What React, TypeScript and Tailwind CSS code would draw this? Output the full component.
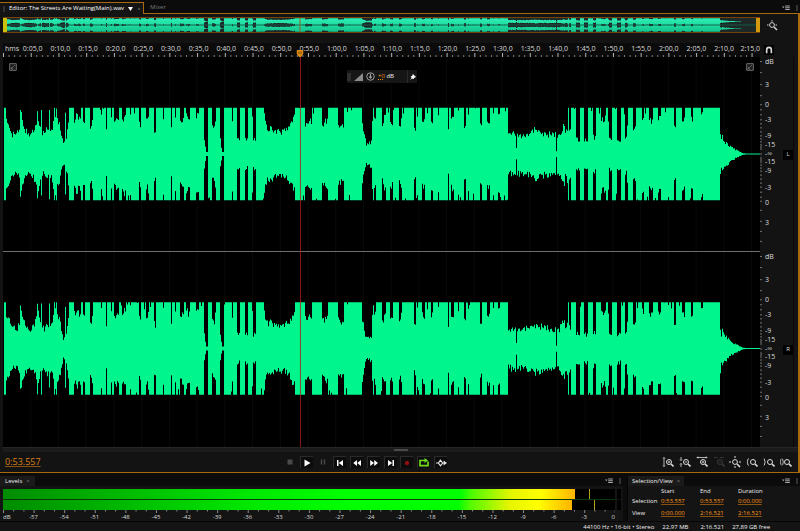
import React, { useState } from "react";

// Total clip length and cursor position, in seconds
const DURATION = 136.521;
const CURSOR = 53.557;
const WAVE_WIDTH = 757;
const FULL = 46;

// Outline of the clip as [x, half height]
const envelope: [number, number][] = [
  [0, 0], [1, 46], [2, 46], [2.5, 33], [5, 29], [7, 25], [9, 20], [11, 21], [13, 19], [15, 22], [16, 24],
  [17, 42], [18, 40], [19, 32], [21, 26], [24, 20], [27, 20], [30, 23], [32, 27], [33, 30], [34, 45], [35, 36],
  [36, 31], [37, 26], [38, 43], [39, 22], [41, 19], [43, 25], [45, 24], [46, 42], [47, 24], [48, 22], [49, 26],
  [50, 33], [51, 46], [52, 38], [53, 46], [54, 33], [56, 29], [58, 18], [59, 14], [60, 10], [61, 12], [62, 40],
  [63, 17], [64, 22], [65, 28], [66, 46], [260.5, 46], [261.5, 34], [263, 28], [265, 24], [268, 27], [272, 22],
  [277, 22], [282, 23], [286, 27], [289, 33], [291, 36], [292, 46], [358, 46], [359, 30], [361, 17], [363, 10],
  [368, 12], [369, 46], [504, 46], [505, 18], [510, 21], [518, 19], [525, 20], [531, 24], [540, 21], [549, 19],
  [556, 19], [558, 23], [561, 30], [562, 21], [564, 26], [565, 46], [716, 46], [717, 22], [718, 14], [719, 17],
  [721, 12], [724, 11], [727, 7], [731, 5], [735, 3], [739, 1], [742, 0.5], [757, 0.5],
];

// Places where the loud parts drop: [from, to, half height]
const dips: [number, number, number][] = [
  [71, 73, 34], [73, 75, 38], [75, 78, 35], [80, 82, 33], [87, 89, 27], [89, 90, 34], [98, 99, 38], [103, 104, 23],
  [108, 109, 36], [111, 113, 33], [113, 116, 35], [119, 121, 35], [121, 123, 39], [127, 128, 41], [136, 138, 30],
  [143, 145, 33], [145, 146, 38], [151, 153, 24], [160, 161, 38], [168, 169, 24], [172, 173, 35], [177, 179, 31],
  [179, 181, 34], [183, 185, 37], [185, 187, 34], [193, 196, 38], [201, 202, 14], [202, 203, 7], [203, 205, 2],
  [209, 212, 27], [212, 213, 33], [217, 218, 14], [218, 219, 6], [219, 221, 2], [229, 230, 34], [234, 237, 14],
  [242, 245, 14], [249, 250, 38], [250, 253, 14], [302, 306, 30], [306, 309, 32], [319, 322, 29], [322, 325, 32],
  [335, 338, 28], [338, 341, 27], [369, 370, 32], [371, 373, 33], [379, 381, 27], [381, 383, 36], [387, 390, 31],
  [396, 398, 28], [398, 399, 36], [411, 413, 25], [414, 415, 38], [419, 422, 33], [428, 430, 34], [435, 436, 40],
  [445, 446, 23], [448, 451, 34], [455, 456, 40], [461, 463, 27], [465, 466, 38], [477, 479, 28], [484, 487, 34],
  [490, 491, 40], [495, 497, 38], [513, 514, 6], [553, 554, 3], [566, 568, 22], [573, 577, 15], [581, 585, 14],
  [590, 593, 17], [598, 600, 36], [600, 603, 35], [605, 606, 34], [606, 609, 15], [614, 618, 14], [622, 624, 18],
  [624, 625, 26], [630, 633, 27], [639, 641, 37], [646, 650, 33], [655, 658, 35], [671, 673, 25], [679, 682, 34],
  [688, 690, 35], [698, 700, 41],
];

const heightAt = (x: number) => {
  const dip = dips.find(([from, to]) => x >= from && x < to);
  if (dip) return dip[2];
  const i = envelope.findIndex(([px]) => px > x);
  if (i < 1) return envelope[envelope.length - 1][1];
  const [x0, h0] = envelope[i - 1];
  const [x1, h1] = envelope[i];
  return h0 + ((h1 - h0) * (x - x0)) / (x1 - x0);
};

// Small repeatable noise so that both channels look sampled
const noise = (n: number) => {
  const v = Math.sin(n * 127.1) * 43758.5453;
  return v - Math.floor(v);
};

const halfWave = (center: number, sign: number, scale: number, seed: number) => {
  let d = "";
  for (let x = 0; x < WAVE_WIDTH; x++) {
    let h = heightAt(x);
    if (h < FULL - 0.5 && h > 2) h += (noise(x + seed) - 0.5) * Math.min(7, h * 0.35);
    else if (h >= FULL - 0.5 && noise(x * 3 + seed) > 0.95) h -= 7 * noise(x + seed);
    const y = (center + sign * Math.min(h, FULL) * scale).toFixed(2);
    d += `V${y}H${x + 1}`;
  }
  return `M0 ${center}${d}V${center}Z`;
};

const channelPath = (center: number, scale: number, seed: number) =>
  halfWave(center, -1, scale, seed) + halfWave(center, 1, scale, seed + 500);

const waveLeft = channelPath(96.5, 1, 1);
const waveRight = channelPath(290, 1, 9);
const overviewPath = channelPath(3.75, 0.078, 1) + channelPath(11.25, 0.078, 9);

const timeLabels = Array.from({ length: 27 }, (_, i) => {
  const s = (i + 1) * 5;
  return `${Math.floor(s / 60)}:${String(s % 60).padStart(2, "0")},0`;
});

// dB labels, each with the space that stands above it
const channelScale: [string, number][] = [
  ["dB", 5], ["3", 23], ["0", 20], ["-3", 15], ["-9", 16], ["-15", 9], ["-∞", 9],
  ["-15", 8], ["-9", 9], ["-3", 17], ["0", 14], ["3", 20],
];
const tickRows = [5, 16, 28, 39, 48, 53, 58, 63, 67, 71, 75, 79, 82, 85, 88, 90, 92, 97, 101, 103, 105, 108, 111, 114, 118, 122, 126, 130, 135, 140, 144, 153, 164, 174, 184];

const meterLabels = ["-57", "-54", "-51", "-48", "-45", "-42", "-39", "-36", "-33", "-30", "-27", "-24", "-21", "-18", "-15", "-12", "-9", "-6", "-3"];

type IconProps = { children: React.ReactNode; className?: string };

const Icon = ({ children, className = "size-3" }: IconProps) => (
  <svg viewBox="0 0 12 12" className={className} fill="none" stroke="currentColor" strokeWidth="1" aria-hidden="true">
    {children}
  </svg>
);

const Lens = ({ sign = "plus" }: { sign?: string }) => (
  <>
    <circle cx="7" cy="6" r="2.5" />
    <path d="M9 8l2.5 2.5" strokeWidth="1.6" />
    {sign !== "none" && <path d="M5.8 6h2.4" strokeWidth="0.8" />}
    {sign === "plus" && <path d="M7 4.8v2.4" strokeWidth="0.8" />}
  </>
);

const MenuIcon = () => (
  <svg viewBox="0 0 8 6" className="h-1.5 w-2" fill="#a8a8a8" aria-hidden="true">
    <path d="M0 1.5h2.6L1.3 3.3zM3.2 .5h4.6v1H3.2zM3.2 2.2h4.6v1H3.2zM3.2 3.9h4.6v1H3.2z" />
  </svg>
);

const Grip = () => <span className="h-1.5 w-0.5 bg-[#333333]" />;

const transport = [
  { label: "Stop", color: "text-[#4a4a4a]", box: false, icon: <path d="M3.5 3.5h5v5h-5z" fill="currentColor" stroke="none" /> },
  { label: "Play", color: "text-white", box: true, icon: <path d="M3.5 2.5L9.5 6l-6 3.5z" fill="currentColor" stroke="none" /> },
  { label: "Pause", color: "text-[#4a4a4a]", box: false, icon: <path d="M4.5 3.5v5M7.5 3.5v5" strokeWidth="1.4" /> },
  { label: "Move to previous", color: "text-white", box: true, icon: <path d="M3 3h1.5v6H3zM9 3v6L4.8 6z" fill="currentColor" stroke="none" /> },
  { label: "Rewind", color: "text-white", box: true, icon: <path d="M6 3v6L2.2 6zM10 3v6L6.2 6z" fill="currentColor" stroke="none" /> },
  { label: "Fast forward", color: "text-white", box: true, icon: <path d="M2.2 3v6L6 6zM6.2 3v6L10 6z" fill="currentColor" stroke="none" /> },
  { label: "Move to next", color: "text-white", box: true, icon: <path d="M3 3v6l4.2-3zM7.5 3H9v6H7.5z" fill="currentColor" stroke="none" /> },
  { label: "Record", color: "text-[#8e0f0f]", box: true, icon: <circle cx="6" cy="6" r="2.2" fill="currentColor" stroke="none" /> },
  { label: "Loop playback", color: "text-[#6fdc1e]", box: true, icon: <><path d="M4 3.5H2v5.2h8V4.6M4 3.5h3" strokeWidth="1.7" /><path d="M6.5 1l3.6 2.5L6.5 6z" fill="currentColor" stroke="none" /></> },
  { label: "Skip selection", color: "text-[#e6e6e6]", box: true, icon: <><path d="M1 6h2.5M7.5 6H10M5.5 3.2L3.4 6l2.1 2.8L7.6 6z" strokeWidth="1.2" /><path d="M8.6 3.6L12 6 8.6 8.4z" fill="currentColor" stroke="none" /></> },
];

const zooms = [
  { label: "Zoom in amplitude", dim: false, icon: <><path d="M2 1.5v9M1 2.5l1-1 1 1M1 9.5l1 1 1-1" strokeWidth="0.8" /><Lens /></> },
  { label: "Zoom out amplitude", dim: false, icon: <><path d="M2 1v3.5M2 7.5v3.5M1 3.5l1 1 1-1M1 8.5l1-1 1 1" strokeWidth="0.8" /><Lens sign="minus" /></> },
  { label: "Zoom in time", dim: false, icon: <><path d="M1 1.5h10M2 .5l-1 1 1 1M10 .5l1 1-1 1" strokeWidth="0.8" /><Lens /></> },
  { label: "Zoom out time", dim: true, icon: <><path d="M1 1.5h4M7 1.5h4" strokeWidth="0.8" /><Lens sign="minus" /></> },
  { label: "Zoom out full", dim: false, icon: <><circle cx="6" cy="6" r="2.4" /><path d="M8 8l3 3" strokeWidth="1.6" /><path d="M6 0v2M6 10v2M0 6h2M10 6h2" /></> },
  { label: "Zoom to in point", dim: false, icon: <><path d="M2.6 2.5c-1.2 0-.4 3-1.6 3.5 1.2.5.4 3.5 1.6 3.5" strokeWidth="0.9" /><Lens sign="none" /></> },
  { label: "Zoom to out point", dim: false, icon: <><path d="M.8 2.5c1.2 0 .4 3 1.6 3.5-1.2.5-.4 3.5-1.6 3.5" strokeWidth="0.9" /><Lens sign="none" /></> },
  { label: "Zoom to selection", dim: false, icon: <><path d="M1.4 3C.4 3 1 5.5 0 6c1 .5.4 3 1.4 3M2.2 3c1 0 .4 2.5 1.4 3-1 .5-.4 3-1.4 3" strokeWidth="0.9" /><Lens sign="none" /></> },
];

const selectionRows = [
  { name: "Selection", values: ["0:53.557", "0:53.557", "0:00.000"] },
  { name: "View", values: ["0:00.000", "2:16.521", "2:16.521"] },
];

const Overview = () => (
  <div className="flex items-center">
    <div className="flex h-4 min-w-0 flex-1 border-y border-[#74420f] bg-[#1e2826]">
      <svg viewBox="0 0 757 15" preserveAspectRatio="none" className="h-full w-full">
        <defs>
          <linearGradient id="overview" x1="0" y1="0" x2="0" y2="1">
            <stop offset="0" stopColor="#2df0b6" />
            <stop offset="1" stopColor="#12c48c" />
          </linearGradient>
        </defs>
        <path d={overviewPath} fill="url(#overview)" />
        <path d="M0 7.5H757" stroke="#0c7d5c" strokeWidth="0.6" />
        <rect x="0" y="0" width="4" height="15" fill="#c9c20c" />
        <rect x="753" y="0" width="4" height="15" fill="#d29a0c" />
        <path d={`M${(CURSOR / DURATION) * 757} 0V15`} stroke="#9c5a24" />
      </svg>
    </div>
    <div className="flex w-[38px] pl-1.5">
      <button aria-label="Zoom navigator" className="text-[#d0d0d0]">
        <Icon className="size-3">
          <circle cx="6" cy="6" r="2.4" />
          <path d="M8 8l3 3" strokeWidth="1.6" />
          <path d="M6 1v1.5M1 6h1.5M9.5 6H11" />
        </Icon>
      </button>
    </div>
  </div>
);

const Ruler = () => {
  const ticks = Array.from({ length: 136 }, (_, s) => s);
  return (
    <div className="flex">
      <div className="relative min-w-0 flex-1 bg-[#0b0b0b]">
        <div className="flex h-3 items-center text-[7px] leading-3 text-[#dcdcdc]">
          <span className="w-0 flex-[250] pl-0.5 whitespace-nowrap">hms</span>
          {timeLabels.map((label, i) => (
            <span
              key={label}
              className={
                i === timeLabels.length - 1
                  ? "flex w-0 flex-[402] justify-end"
                  : "flex w-0 flex-[500] justify-center"
              }
            >
              {label}
            </span>
          ))}
        </div>
        <svg viewBox="0 0 757 4" preserveAspectRatio="none" className="-mt-0.5 h-1 w-full">
          {ticks.map((s) => (
            <path
              key={s}
              d={`M${(s / DURATION) * 757 + 0.5} ${s % 5 === 0 ? 0 : 2}V4`}
              stroke={s % 5 === 0 ? "#b5b5b5" : "#7a7a7a"}
            />
          ))}
        </svg>
        {/* Playhead handle */}
        <svg
          viewBox="0 0 7 7"
          className="absolute bottom-0 size-[7px] -translate-x-1/2"
          style={{ left: `${(CURSOR / DURATION) * 100}%` }}
        >
          <path d="M0 0h7v3.5L4.5 7h-2L0 3.5z" fill="#d98a16" />
          <path d="M2.5 1.5v2.5M4.5 1.5v2.5" stroke="#6b3d04" strokeWidth="0.8" />
        </svg>
      </div>
      <div className="flex w-[38px] items-center pl-1">
        <button aria-label="Snapping" aria-pressed="true" className="bg-black text-[#d8d8d8]">
          <Icon className="size-2.5">
            <path d="M3.2 10V5.6a2.8 2.8 0 015.6 0V10" strokeWidth="2" />
          </Icon>
        </button>
      </div>
    </div>
  );
};

const Hud = () => (
  <div className="absolute top-[13px] left-[344px] flex h-[13px] w-[70px] items-center gap-[3px] bg-[#161616] text-[6px] text-[#f0f0f0]">
    <span className="h-2 w-1 bg-[#2e2e2e]" />
    <svg viewBox="0 0 9 8" className="h-2 w-[9px]" aria-hidden="true">
      <path d="M0 8L9 0v8z" fill="#8a8a8a" />
    </svg>
    <button aria-label="Adjust amplitude" className="text-[#a0a0a0]">
      <Icon className="size-[9px]">
        <circle cx="6" cy="6" r="5" strokeWidth="1.3" />
        <path d="M6 2v6M4 6l2 2.4L8 6" strokeWidth="1.4" />
      </Icon>
    </button>
    <span className="whitespace-nowrap">
      <span className="text-[#f08c14] underline decoration-dotted">+0</span> dB
    </span>
    <button aria-label="Pin" className="ml-auto flex h-full w-2.5 items-center justify-center border-l border-[#2a2a2a] text-white">
      <Icon className="size-1.5">
        <path d="M6 1l5 5-2 .5-2 2L6.5 10 2 5.5l1.5-.5 2-2zM4 8l-3 3" fill="currentColor" strokeWidth="1.5" />
      </Icon>
    </button>
  </div>
);

const CornerIcon = () => (
  <Icon className="size-2 text-[#6c6c6c]">
    <path d="M1 1h10v10H1z" strokeWidth="1.5" fill="#1c1c1c" />
    <path d="M3 9l6-6M3.5 6v3H6.5" strokeWidth="1.3" />
  </Icon>
);

const ChannelScale = ({ channel }: { channel: string }) => (
  <div className="flex min-h-0 flex-1">
    <svg viewBox="0 0 3 194" preserveAspectRatio="none" className="h-full w-[3px]" aria-hidden="true">
      {tickRows.map((y) => (
        <path key={y} d={`M0 ${y - 0.5}h2`} stroke="#8a8a8a" strokeWidth="0.8" />
      ))}
    </svg>
    <div className="flex w-5 flex-col pl-0.5 text-[7px] text-[#dcdcdc]">
      {channelScale.map(([label, space], i) => (
        <React.Fragment key={i}>
          <div className="basis-0" style={{ flexGrow: space }} />
          <span className="flex h-0 items-center">{label}</span>
        </React.Fragment>
      ))}
      <div className="flex-[29] basis-0" />
    </div>
    <div className="flex flex-1 items-center">
      <span className="flex h-2.5 w-2.5 items-center justify-center bg-black text-[6px] text-[#dcdcdc]">{channel}</span>
    </div>
  </div>
);

const Waves = () => (
  <div className="flex min-h-0 flex-1">
    <div className="relative min-w-0 flex-1 bg-black">
      <svg viewBox="0 0 757 388" preserveAspectRatio="none" className="absolute inset-0 h-full w-full">
        {timeLabels.map((label, i) => (
          <path key={label} d={`M${((i + 1) * 5 * 757) / DURATION} 0V388`} stroke="#070b09" />
        ))}
        <path d={waveLeft} fill="#00f58c" />
        <path d={waveRight} fill="#00f58c" />
        <path d="M0 193.5H757" stroke="#6e6e6e" />
        <path d={`M${(CURSOR / DURATION) * 757 + 0.5} 0V388`} stroke="#b01c1c" strokeOpacity="0.8" />
      </svg>
      <div className="absolute top-1.5 left-1.5">
        <CornerIcon />
      </div>
      <div className="absolute top-1.5 right-1.5">
        <CornerIcon />
      </div>
      <Hud />
    </div>
    <div className="flex w-[38px] flex-col">
      <div className="mr-1 flex min-h-0 flex-1 flex-col border-r border-[#080808]">
        <ChannelScale channel="L" />
        <ChannelScale channel="R" />
      </div>
    </div>
  </div>
);

const Meter = ({ level, peak }: { level: number; peak: number }) => (
  <div className="relative h-2.5 bg-black">
    <div
      className="h-full bg-[linear-gradient(90deg,#008c00_0%,#00e600_42%,#00ff00_60%,#00ff00_80%,#50fa00_82%,#e6f500_89%,#ffff00_94%,#ffb400_100%)]"
      style={{ width: `${level}%` }}
    />
    <span className="absolute inset-y-0 w-px bg-[#b4a014]" style={{ left: `${peak}%` }} />
  </div>
);

const Levels = () => (
  <section className="flex min-w-0 flex-1 flex-col bg-[#141414]">
    <div className="flex h-2.5 items-center justify-between bg-[#0b0b0b] pr-0.5">
      <div className="flex h-full items-center gap-1 bg-[#1a1a1a] px-[5px] text-[6px] text-[#f0f0f0]">
        <span>Levels</span>
        <button aria-label="Close Levels" className="text-[#7c7c7c]">×</button>
      </div>
      <div className="flex items-center gap-1.5">
        <button aria-label="Levels menu">
          <MenuIcon />
        </button>
        <Grip />
      </div>
    </div>
    <div className="flex flex-col px-0.5 pt-[3px]">
      <div className="flex gap-0.5 pl-px">
        <div className="flex flex-1 flex-col gap-px bg-[#0a3a0a]">
          <Meter level={93.5} peak={95.8} />
          <Meter level={93} peak={96.5} />
        </div>
        <div className="flex w-1 flex-col gap-px">
          <span className="flex-1 bg-black" />
          <span className="flex-1 bg-black" />
        </div>
      </div>
      <div className="mr-1.5 flex flex-col pl-px">
        <svg viewBox="0 0 611 3" preserveAspectRatio="none" className="h-[3px] w-full" aria-hidden="true">
          {Array.from({ length: 61 }, (_, i) => i).map((i) => (
            <path key={i} d={`M${i * 10.18 + 0.5} 0V${i % 3 === 0 ? 3 : 1.5}`} stroke="#8a8a8a" />
          ))}
        </svg>
        <div className="flex h-2 items-center text-[6px] text-[#d8d8d8]">
          <span className="w-0 flex-1">dB</span>
          {meterLabels.map((label) => (
            <span key={label} className="flex w-0 flex-[2] justify-center">{label}</span>
          ))}
          <span className="flex w-0 flex-1 justify-end">0</span>
        </div>
      </div>
    </div>
  </section>
);

const SelectionView = () => (
  <section className="w-[173px] border-l border-[#050505] bg-[#141414]">
    <div className="flex h-2.5 items-center justify-between bg-[#0b0b0b] pr-0.5">
      <div className="flex h-full items-center gap-1 bg-[#1a1a1a] px-1 text-[6px] text-[#f0f0f0]">
        <span>Selection/View</span>
        <button aria-label="Close Selection/View" className="text-[#7c7c7c]">×</button>
      </div>
      <div className="flex items-center gap-1.5">
        <button aria-label="Selection/View menu">
          <MenuIcon />
        </button>
        <Grip />
      </div>
    </div>
    <table className="ml-1 w-[148px] table-fixed text-left text-[6px] leading-[10px] text-[#f0f0f0]">
      <thead>
        <tr>
          <td className="w-[29px]" />
          <th className="w-[39px] font-normal" scope="col">Start</th>
          <th className="w-[38px] font-normal" scope="col">End</th>
          <th className="font-normal" scope="col">Duration</th>
        </tr>
      </thead>
      <tbody>
        {selectionRows.map((row) => (
          <tr key={row.name}>
            <th scope="row" className="pb-0.5 font-normal">{row.name}</th>
            {row.values.map((value, i) => (
              <td key={i} className="pb-0.5">
                <button className="block text-[#ff9a1a] underline decoration-[#8a5210]">{value}</button>
              </td>
            ))}
          </tr>
        ))}
      </tbody>
    </table>
  </section>
);

const App = () => {
  const [tab, setTab] = useState("editor");

  return (
    <div className="flex h-screen min-h-[420px] flex-col bg-[#0b0b0b] pt-0.5 font-['Open_Sans','Noto_Sans',sans-serif] text-[#d0d0d0]">
      {/* Tabs */}
      <div className="flex h-3">
        <div className="flex w-36 items-center gap-1 border-t border-r border-[#a8690f] bg-[#141414] pl-[3px]">
          <Grip />
          <button onClick={() => setTab("editor")} aria-pressed={tab === "editor"} className="text-[6px] whitespace-nowrap text-white">
            Editor: The Streets Are Waiting(Main).wav
          </button>
          <button aria-label="Open files">
            <svg viewBox="0 0 5 4" className="h-1 w-[5px]" fill="#fff" aria-hidden="true">
              <path d="M0 0h5L2.5 4z" />
            </svg>
          </button>
          <button aria-label="Close editor" className="text-[6px] leading-none text-[#7c7c7c]">×</button>
        </div>
        <div className="flex flex-1 items-center justify-between border-b border-[#a8690f] pr-0.5 pl-1.5">
          <button onClick={() => setTab("mixer")} aria-pressed={tab === "mixer"} className="text-[6px] text-[#7a7a7a]">
            Mixer
          </button>
          <div className="flex items-center gap-1.5">
            <button aria-label="Editor menu">
              <MenuIcon />
            </button>
            <Grip />
          </div>
        </div>
      </div>

      {/* Editor */}
      <main className="flex min-h-0 flex-1 flex-col border-r-2 border-b border-[#a8690f] bg-[#131313] pt-[3px] pl-[3px]">
        <Overview />
        <div className="h-2.5" />
        <Ruler />
        <Waves />
        <div className="flex h-[5px] items-center justify-center border-t border-[#262626] bg-[#1c1c1c]">
          <span className="h-0.5 w-3.5 bg-[#4a4a4a]" />
        </div>
        <div className="flex h-5 items-center pr-1.5">
          <div className="w-[35.5%] pl-0.5 text-[9px]">
            <button className="text-[#d9801a] underline decoration-[#8a5210]">0:53.557</button>
          </div>
          <div className="flex w-[164px] justify-between">
            {transport.map(({ label, color, box, icon }) => (
              <button
                key={label}
                aria-label={label}
                className={`${color} ${box ? "border-t border-l border-[#2a2a2a] bg-[#0c0c0c]" : ""} flex h-3 w-[13px] items-center justify-center`}
              >
                <Icon className="size-3 shrink-0">{icon}</Icon>
              </button>
            ))}
          </div>
          <div className="ml-auto flex w-[130px] justify-between">
            {zooms.map(({ label, dim, icon }) => (
              <button key={label} aria-label={label} disabled={dim} className={dim ? "text-[#3c3c3c]" : "text-[#dcdcdc]"}>
                <Icon className="size-3">{icon}</Icon>
              </button>
            ))}
          </div>
        </div>
      </main>

      {/* Lower panels */}
      <div className="flex gap-1 pt-[3px]">
        <Levels />
        <SelectionView />
      </div>

      <footer className="flex h-2.5 items-center justify-end gap-2 border-t border-[#050505] bg-[#141414] pt-0.5 pr-[30px] text-[6px] whitespace-nowrap text-[#f0f0f0]">
        <span>44100 Hz • 16-bit • Stereo</span>
        <span>22,97 MB</span>
        <span className="pl-1">2:16.521</span>
        <span>27,89 GB free</span>
      </footer>
    </div>
  );
};

export default App;
